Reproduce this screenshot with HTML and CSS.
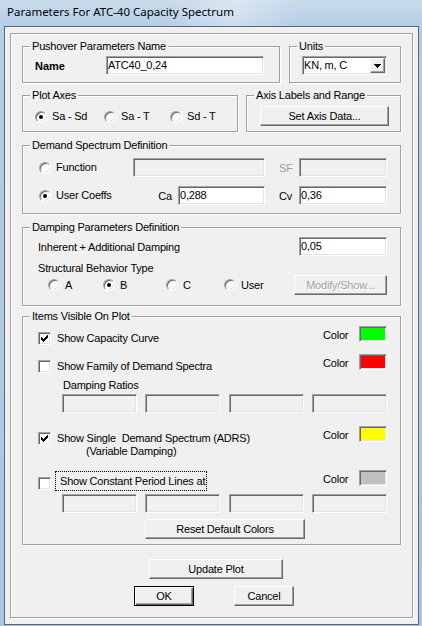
FILE: index.html
```html
<!DOCTYPE html>
<html>
<head>
<meta charset="utf-8">
<title>Parameters For ATC-40 Capacity Spectrum</title>
<link rel="stylesheet" href="styles.css">
</head>
<body>
<div class="window">
  <div class="titlebar">Parameters For ATC-40 Capacity Spectrum</div>
  <div class="client">
    <div class="panel">

      <div class="row row1">
        <div class="group g-push">
          <div class="legend">Pushover Parameters Name</div>
          <div class="name-row">
            <span class="name-label">Name</span>
            <div class="textbox tb-name">ATC40_0,24</div>
          </div>
        </div>
        <div class="group g-units">
          <div class="legend">Units</div>
          <div class="select">
            <span class="select-text">KN, m, C</span>
            <span class="select-btn"><svg width="7" height="4" viewBox="0 0 7 4"><path d="M0 0h7v1H0z M1 1h5v1H1z M2 2h3v1H2z M3 3h1v1H3z" fill="#000"/></svg></span>
          </div>
        </div>
      </div>

      <div class="row row2">
        <div class="group g-axes">
          <div class="legend">Plot Axes</div>
          <div class="axes-radios">
            <div class="radio"><span class="rb on"></span><span>Sa - Sd</span></div>
            <div class="radio"><span class="rb"></span><span>Sa - T</span></div>
            <div class="radio"><span class="rb"></span><span>Sd - T</span></div>
          </div>
        </div>
        <div class="group g-range">
          <div class="legend">Axis Labels and Range</div>
          <div class="btn btn-axis">Set Axis Data...</div>
        </div>
      </div>

      <div class="group g-demand">
        <div class="legend">Demand Spectrum Definition</div>
        <div class="demand-grid">
          <div class="radio"><span class="rb"></span><span>Function</span></div>
          <div class="textbox disabled"></div>
          <span class="side-label dis">SF</span>
          <div class="textbox disabled"></div>
          <div class="radio"><span class="rb on"></span><span>User Coeffs</span></div>
          <div class="ca-field"><span>Ca</span><div class="textbox tb-ca">0,288</div></div>
          <span class="side-label">Cv</span>
          <div class="textbox">0,36</div>
        </div>
      </div>

      <div class="group g-damp">
        <div class="legend">Damping Parameters Definition</div>
        <div class="damp-row1">
          <span>Inherent + Additional Damping</span>
          <div class="textbox">0,05</div>
        </div>
        <div class="damp-label">Structural Behavior Type</div>
        <div class="damp-radios">
          <div class="radio"><span class="rb"></span><span>A</span></div>
          <div class="radio"><span class="rb on"></span><span>B</span></div>
          <div class="radio"><span class="rb"></span><span>C</span></div>
          <div class="radio"><span class="rb"></span><span>User</span></div>
          <div class="btn disabled">Modify/Show...</div>
        </div>
      </div>

      <div class="group g-items">
        <div class="legend">Items Visible On Plot</div>

        <div class="item-row r1">
          <div class="check-wrap">
            <span class="cb"><svg width="9" height="9" viewBox="0 0 9 9"><path d="M7 1h1v1H7z M6 2h2v1H6z M1 3h1v1H1z M5 3h3v1H5z M1 4h2v1H1z M4 4h3v1H4z M1 5h5v1H1z M2 6h3v1H2z M3 7h1v1H3z" fill="#000"/></svg></span>
            <span class="cb-text">Show Capacity Curve</span>
          </div>
          <span class="color-label">Color</span>
          <span class="swatch sw-green"></span>
        </div>

        <div class="item-row r2">
          <div class="check-wrap">
            <span class="cb"></span>
            <span class="cb-text">Show Family of Demand Spectra</span>
          </div>
          <span class="color-label">Color</span>
          <span class="swatch sw-red"></span>
        </div>

        <div class="ratios-label">Damping Ratios</div>
        <div class="four-boxes fb1">
          <div class="textbox disabled"></div>
          <div class="textbox disabled"></div>
          <div class="textbox disabled"></div>
          <div class="textbox disabled"></div>
        </div>

        <div class="item-row r3">
          <div class="check-wrap">
            <span class="cb"><svg width="9" height="9" viewBox="0 0 9 9"><path d="M7 1h1v1H7z M6 2h2v1H6z M1 3h1v1H1z M5 3h3v1H5z M1 4h2v1H1z M4 4h3v1H4z M1 5h5v1H1z M2 6h3v1H2z M3 7h1v1H3z" fill="#000"/></svg></span>
            <span class="cb-text two-line"><span class="l1">Show Single&nbsp; Demand Spectrum (ADRS)</span><span class="l2">(Variable Damping)</span></span>
          </div>
          <span class="color-label">Color</span>
          <span class="swatch sw-yellow"></span>
        </div>

        <div class="item-row r4">
          <div class="check-wrap">
            <span class="cb"></span>
            <span class="cb-text focus">Show Constant Period Lines at</span>
          </div>
          <span class="color-label">Color</span>
          <span class="swatch sw-grey"></span>
        </div>

        <div class="four-boxes fb2">
          <div class="textbox disabled"></div>
          <div class="textbox disabled"></div>
          <div class="textbox disabled"></div>
          <div class="textbox disabled"></div>
        </div>

        <div class="btn btn-reset">Reset Default Colors</div>
      </div>

      <div class="btn btn-update">Update Plot</div>
      <div class="ok-row">
        <div class="btn default btn-ok">OK</div>
        <div class="btn btn-cancel">Cancel</div>
      </div>

    </div>
  </div>
</div>
</body>
</html>
```

FILE: styles.css
```css
* {
  box-sizing: border-box;
}

html,
body {
  margin: 0;
  padding: 0;
}

body {
  width: 422px;
  height: 626px;
  overflow: hidden;
  font-family: "Liberation Sans", Arial, sans-serif;
  font-size: 11px;
  letter-spacing: -0.2px;
  color: #000;
}

.window {
  width: 422px;
  height: 626px;
  padding: 0 3px 1px 4px;
  display: flex;
  flex-direction: column;
  background:
    linear-gradient(100deg, rgba(255, 255, 255, 0) 40%, rgba(255, 255, 255, 0.35) 55%, rgba(255, 255, 255, 0) 70%) 0 0 / 100% 26px no-repeat,
    linear-gradient(180deg, #c9dae9 0px, #bfd4ea 14px, #b6cde8 26px, #b0c9e7 60%, #a9c4e5 100%);
}

.titlebar {
  height: 26px;
  padding-left: 3px;
  line-height: 24px;
  font-family: "Noto Sans", "Liberation Sans", sans-serif;
  font-size: 11.5px;
  letter-spacing: 0;
  white-space: nowrap;
  color: #000;
}

.client {
  width: 415px;
  height: 599px;
  border: 1px solid #5b6672;
  background: #f0f0f0;
  padding: 6px 5px 5px 5px;
}

.panel {
  width: 403px;
  height: 585px;
  border: 1px solid #a0a0a0;
  box-shadow: inset 1px 1px #fff, 1px 1px #fff;
  padding: 12px 11px 11px 11px;
  display: flex;
  flex-direction: column;
}

/* group boxes */
.group {
  border: 1px solid #a0a0a0;
  box-shadow: inset 1px 1px #fff, 1px 1px #fff;
}

.legend {
  width: max-content;
  height: 13px;
  margin: -7px 0 -6px 7px;
  padding: 0 2px;
  line-height: 13px;
  background: #f0f0f0;
  white-space: nowrap;
}

.row {
  display: flex;
}

.row1 {
  gap: 9px;
}

.row2 {
  gap: 8px;
  margin-top: 12px;
}

.g-push {
  width: 258px;
  height: 37px;
}

.g-units {
  width: 112px;
  height: 37px;
}

.g-axes {
  width: 216px;
  height: 37px;
}

.g-range {
  width: 155px;
  height: 37px;
}

.g-demand {
  height: 69px;
  margin-top: 13px;
}

.g-damp {
  height: 79px;
  margin-top: 13px;
}

.g-items {
  height: 229px;
  margin-top: 10px;
}

/* controls */
.textbox {
  height: 19px;
  background: #fff;
  border: 1px solid;
  border-color: #a0a0a0 #fff #fff #a0a0a0;
  box-shadow: inset 1px 1px #696969, inset -1px -1px #e3e3e3;
  padding: 0 1px;
  line-height: 17px;
  white-space: nowrap;
  overflow: hidden;
}

.textbox.disabled {
  background: #f0f0f0;
}

.btn {
  height: 20px;
  background: #f0f0f0;
  border: 1px solid;
  border-color: #fff #696969 #696969 #fff;
  box-shadow: inset -1px -1px #a0a0a0, inset 1px 1px #f0f0f0;
  text-align: center;
  line-height: 18px;
  white-space: nowrap;
}

.btn.disabled {
  color: #a0a0a0;
  text-shadow: 1px 1px #fff;
}

.btn.default {
  border: 1px solid #000;
  box-shadow: inset 1px 1px #fff, inset -1px -1px #696969, inset -2px -2px #a0a0a0;
}

.radio {
  display: flex;
  align-items: center;
  gap: 5px;
  line-height: 13px;
  white-space: nowrap;
}

.rb {
  flex: none;
  width: 12px;
  height: 12px;
  border-radius: 50%;
  border: 1px solid;
  border-color: #a0a0a0 #fff #fff #a0a0a0;
  box-shadow: inset 1px 1px #696969, inset -1px -1px #e3e3e3;
  background: #fff;
  display: flex;
  align-items: center;
  justify-content: center;
}

.rb.on::after {
  content: "";
  width: 4px;
  height: 4px;
  border-radius: 50%;
  background: #000;
}

.cb {
  flex: none;
  width: 13px;
  height: 13px;
  border: 1px solid;
  border-color: #a0a0a0 #fff #fff #a0a0a0;
  box-shadow: inset 1px 1px #696969, inset -1px -1px #e3e3e3;
  background: #fff;
  display: flex;
  align-items: center;
  justify-content: center;
}

.cb svg {
  display: block;
}

.swatch {
  display: block;
  width: 28px;
  height: 16px;
  border: 1px solid;
  border-color: #a0a0a0 #fff #fff #a0a0a0;
  box-shadow: inset 1px 1px #696969, inset -1px -1px #e3e3e3;
}

.sw-green { background: #00ff00; }
.sw-red { background: #ff0000; }
.sw-yellow { background: #ffff00; }
.sw-grey { background: #c0c0c0; }

/* row 1 */
.name-row {
  display: flex;
  align-items: center;
  margin: 9px 0 0 12px;
}

.name-label {
  width: 71px;
  font-weight: bold;
  letter-spacing: 0;
}

.tb-name {
  width: 158px;
}

.select {
  display: flex;
  align-items: stretch;
  width: 85px;
  height: 19px;
  margin: 9px 0 0 12px;
  padding: 1px;
  background: #fff;
  border: 1px solid;
  border-color: #a0a0a0 #fff #fff #a0a0a0;
  box-shadow: inset 1px 1px #696969, inset -1px -1px #e3e3e3;
}

.select-text {
  flex: 1;
  line-height: 15px;
  white-space: nowrap;
}

.select-btn {
  width: 15px;
  background: #f0f0f0;
  border: 1px solid;
  border-color: #fff #696969 #696969 #fff;
  box-shadow: inset -1px -1px #a0a0a0;
  display: flex;
  align-items: center;
  justify-content: center;
}

.select-btn svg {
  display: block;
  margin-top: 1px;
}

/* row 2 */
.axes-radios {
  display: grid;
  grid-template-columns: 69px 66px auto;
  margin: 14px 0 0 12px;
}

.btn-axis {
  width: 129px;
  margin: 10px 0 0 13px;
}

/* demand */
.demand-grid {
  display: grid;
  grid-template-columns: 94px 132px 34px 88px;
  grid-template-rows: 19px 19px;
  row-gap: 9px;
  align-items: center;
  margin: 12px 0 0 16px;
}

.side-label {
  padding-left: 14px;
}

.side-label.dis {
  color: #a0a0a0;
}

.ca-field {
  display: flex;
  align-items: center;
  justify-content: flex-end;
  gap: 6px;
}

.tb-ca {
  width: 87px;
}

/* damping */
.damp-row1 {
  display: grid;
  grid-template-columns: 261px 88px;
  align-items: center;
  height: 19px;
  margin: 9px 0 0 15px;
}

.damp-label {
  margin: 6px 0 0 15px;
  line-height: 13px;
}

.damp-radios {
  display: grid;
  grid-template-columns: 55px 63px 58px 70px 93px;
  align-items: center;
  height: 20px;
  margin-left: 25px;
}

/* items */
.item-row {
  display: grid;
  grid-template-columns: 285px 36px 28px;
  align-items: start;
  margin-left: 15px;
}

.r1 {
  margin-top: 9px;
}

.r2 {
  margin-top: 9px;
}

.r3 {
  margin-top: 13px;
}

.r4 {
  margin-top: 12px;
}

.check-wrap {
  display: flex;
  align-items: flex-start;
  gap: 6px;
  margin-top: 6px;
}

.cb-text {
  line-height: 13px;
  white-space: nowrap;
}

.two-line {
  display: flex;
  flex-direction: column;
  white-space: pre;
}

.two-line .l2 {
  padding-left: 29px;
}

.r4 .check-wrap {
  margin-top: 1px;
  gap: 4px;
}

.r4 .cb {
  margin-top: 6px;
}

.focus {
  display: block;
  width: max-content;
  height: 20px;
  border: 1px dotted #000;
  padding: 0 1px 0 4px;
  line-height: 18px;
}

.color-label {
  margin-top: 3px;
  line-height: 13px;
}

.ratios-label {
  margin: 6px 0 0 40px;
  line-height: 13px;
}

.four-boxes {
  display: grid;
  grid-template-columns: 75px 75px 75px 75px;
  justify-content: space-between;
  width: 325px;
  margin-left: 39px;
}

.fb1 {
  margin-top: 2px;
}

.fb2 {
  margin-top: 3px;
}

.btn-reset {
  width: 160px;
  margin: 6px 0 0 122px;
}

/* bottom buttons */
.btn-update {
  width: 134px;
  margin: 14px 0 0 127px;
}

.ok-row {
  display: flex;
  gap: 40px;
  margin: 7px 0 0 112px;
}

.btn-ok,
.btn-cancel {
  width: 60px;
}
```
